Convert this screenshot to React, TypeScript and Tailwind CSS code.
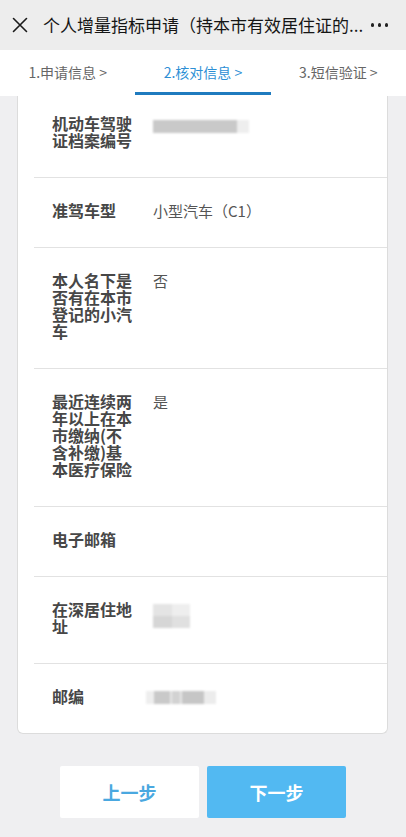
import React from 'react'

const font = { fontFamily: '"Noto Sans CJK SC", "Noto Sans", sans-serif' }

type Row = {
  label: string[]
  value?: React.ReactNode
}

function BlurBar() {
  return (
    <div className="mt-[5px] flex h-[13px] items-stretch blur-[1px]">
      <div className="w-[84px] bg-[#c9c9c9]" />
      <div className="w-[12px] bg-[#eeeeee]" />
    </div>
  )
}

function BlurBlock() {
  return (
    <div className="mt-[3px] grid h-[24px] w-[37px] grid-cols-2 grid-rows-2 blur-[1px]">
      <div className="bg-[#e4e4e4]" />
      <div className="bg-[#eeeeee]" />
      <div className="bg-[#d6d6d6]" />
      <div className="bg-[#e0e0e0]" />
    </div>
  )
}

function BlurCode() {
  return (
    <div className="-ml-[7px] mt-[3px] flex h-[13px] blur-[1px]">
      <div className="w-[8px] bg-[#eeeeee]" />
      <div className="w-[16px] bg-[#c9c9c9]" />
      <div className="w-[2px] bg-[#e6e6e6]" />
      <div className="w-[8px] bg-[#d2d2d2]" />
      <div className="w-[2px] bg-[#e6e6e6]" />
      <div className="w-[22px] bg-[#c6c6c6]" />
      <div className="w-[12px] bg-[#ececec]" />
    </div>
  )
}

const rows: Row[] = [
  { label: ['机动车驾驶', '证档案编号'], value: <BlurBar /> },
  { label: ['准驾车型'], value: '小型汽车（C1）' },
  { label: ['本人名下是', '否有在本市', '登记的小汽', '车'], value: '否' },
  { label: ['最近连续两', '年以上在本', '市缴纳(不', '含补缴)基', '本医疗保险'], value: '是' },
  { label: ['电子邮箱'] },
  { label: ['在深居住地', '址'], value: <BlurBlock /> },
  { label: ['邮编'], value: <BlurCode /> },
]

const tabs = ['1.申请信息 >', '2.核对信息 >', '3.短信验证 >']

export default function App() {
  return (
    <div className="flex min-h-screen flex-col bg-[#efeff1]" style={font}>
      {/* Header */}
      <div className="flex h-[50px] items-center bg-[#ededed] pl-[12px] pr-[18px]">
        <svg width="16" height="16" viewBox="0 0 16 16" className="shrink-0">
          <path d="M1.5 1.5 L14.5 14.5 M14.5 1.5 L1.5 14.5" stroke="#1a1a1a" strokeWidth="1.6" strokeLinecap="round" />
        </svg>
        <div className="ml-[15px] flex-1 whitespace-nowrap text-[17px] leading-[22px] text-[#151515]">
          个人增量指标申请（持本市有效居住证的...
        </div>
        <div className="flex shrink-0 items-center gap-[3.5px]">
          <span className="h-[3.5px] w-[3.5px] rounded-full bg-[#222]" />
          <span className="h-[3.5px] w-[3.5px] rounded-full bg-[#222]" />
          <span className="h-[3.5px] w-[3.5px] rounded-full bg-[#222]" />
        </div>
      </div>

      {/* Steps */}
      <div className="flex h-[46px] bg-white">
        {tabs.map((t, i) => (
          <div key={t} className="relative flex flex-1 items-center justify-center pb-[1px]">
            <span className={`text-[14px] ${i === 1 ? 'text-[#2d8fd5]' : 'text-[#666666]'}`}>{t}</span>
            {i === 1 && <div className="absolute bottom-[1px] left-0 right-0 h-[3px] bg-[#1f7bbf]" />}
          </div>
        ))}
      </div>

      {/* Card */}
      <div className="ml-[17px] mr-[18px] rounded-b-[6px] border-x border-b border-[#dcdcdc] bg-white pl-[16px]">
        {rows.map((row, i) => (
          <div
            key={i}
            className={`flex items-start pb-[28px] pl-[18px] ${i === 0 ? 'pt-[19px]' : 'border-t border-[#e2e2e2] pt-[24px]'}`}
          >
            <div className="w-[80px] shrink-0 text-[16px] font-bold leading-[17px] text-[#474747]">
              {row.label.map((l, j) => (
                <React.Fragment key={j}>
                  {j > 0 && <br />}
                  {l}
                </React.Fragment>
              ))}
            </div>
            <div className="ml-[21px] text-[15px] leading-[17px] text-[#555555]">{row.value}</div>
          </div>
        ))}
      </div>

      {/* Buttons */}
      <div className="mt-[32px] flex justify-center gap-[8px]">
        <button className="h-[52px] w-[139px] rounded-[2px] bg-white text-[18px] font-bold text-[#4aa8e0]">
          上一步
        </button>
        <button className="h-[52px] w-[139px] rounded-[2px] bg-[#52b9f2] text-[18px] font-bold text-white">
          下一步
        </button>
      </div>
    </div>
  )
}
